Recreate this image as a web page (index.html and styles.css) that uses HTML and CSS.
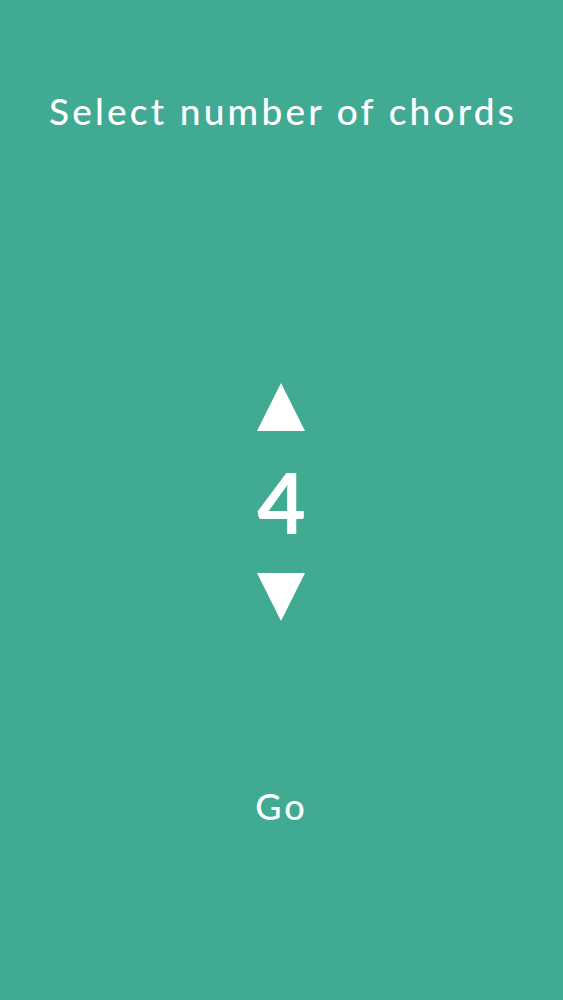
FILE: index.html
```html
<!DOCTYPE html>
<html>
<head>
<meta charset="utf-8">
<link rel="stylesheet" href="styles.css">
</head>
<body>
<div class="screen">
  <h1 class="title">Select number of chords</h1>
  <div class="picker">
    <div class="arrow arrow-up"></div>
    <div class="count">4</div>
    <div class="arrow arrow-down"></div>
  </div>
  <div class="go">Go</div>
</div>
</body>
</html>
```
FILE: styles.css
```css
html, body {
  margin: 0;
  padding: 0;
  background: #40aa93;
}
.screen {
  width: 563px;
  height: 1000px;
  display: flex;
  flex-direction: column;
  align-items: center;
  color: #ffffff;
  font-family: Lato, "Noto Sans", sans-serif;
}
.title {
  margin: 86px 0 0 0;
  padding-left: 3px;
  font-size: 37px;
  font-weight: 500;
  letter-spacing: 3.2px;
  line-height: 50px;
  white-space: nowrap;
}
.picker {
  margin-top: 247px;
  display: flex;
  flex-direction: column;
  align-items: center;
}
.arrow {
  width: 0;
  height: 0;
  border-left: 24px solid transparent;
  border-right: 24px solid transparent;
}
.arrow-up {
  border-bottom: 48px solid #ffffff;
}
.arrow-down {
  border-top: 48px solid #ffffff;
}
.count {
  font-size: 84px;
  line-height: 142px;
  font-weight: 700;
}
.go {
  margin-top: 160px;
  font-size: 36px;
  font-weight: 500;
  letter-spacing: 3px;
  line-height: 50px;
}
```
